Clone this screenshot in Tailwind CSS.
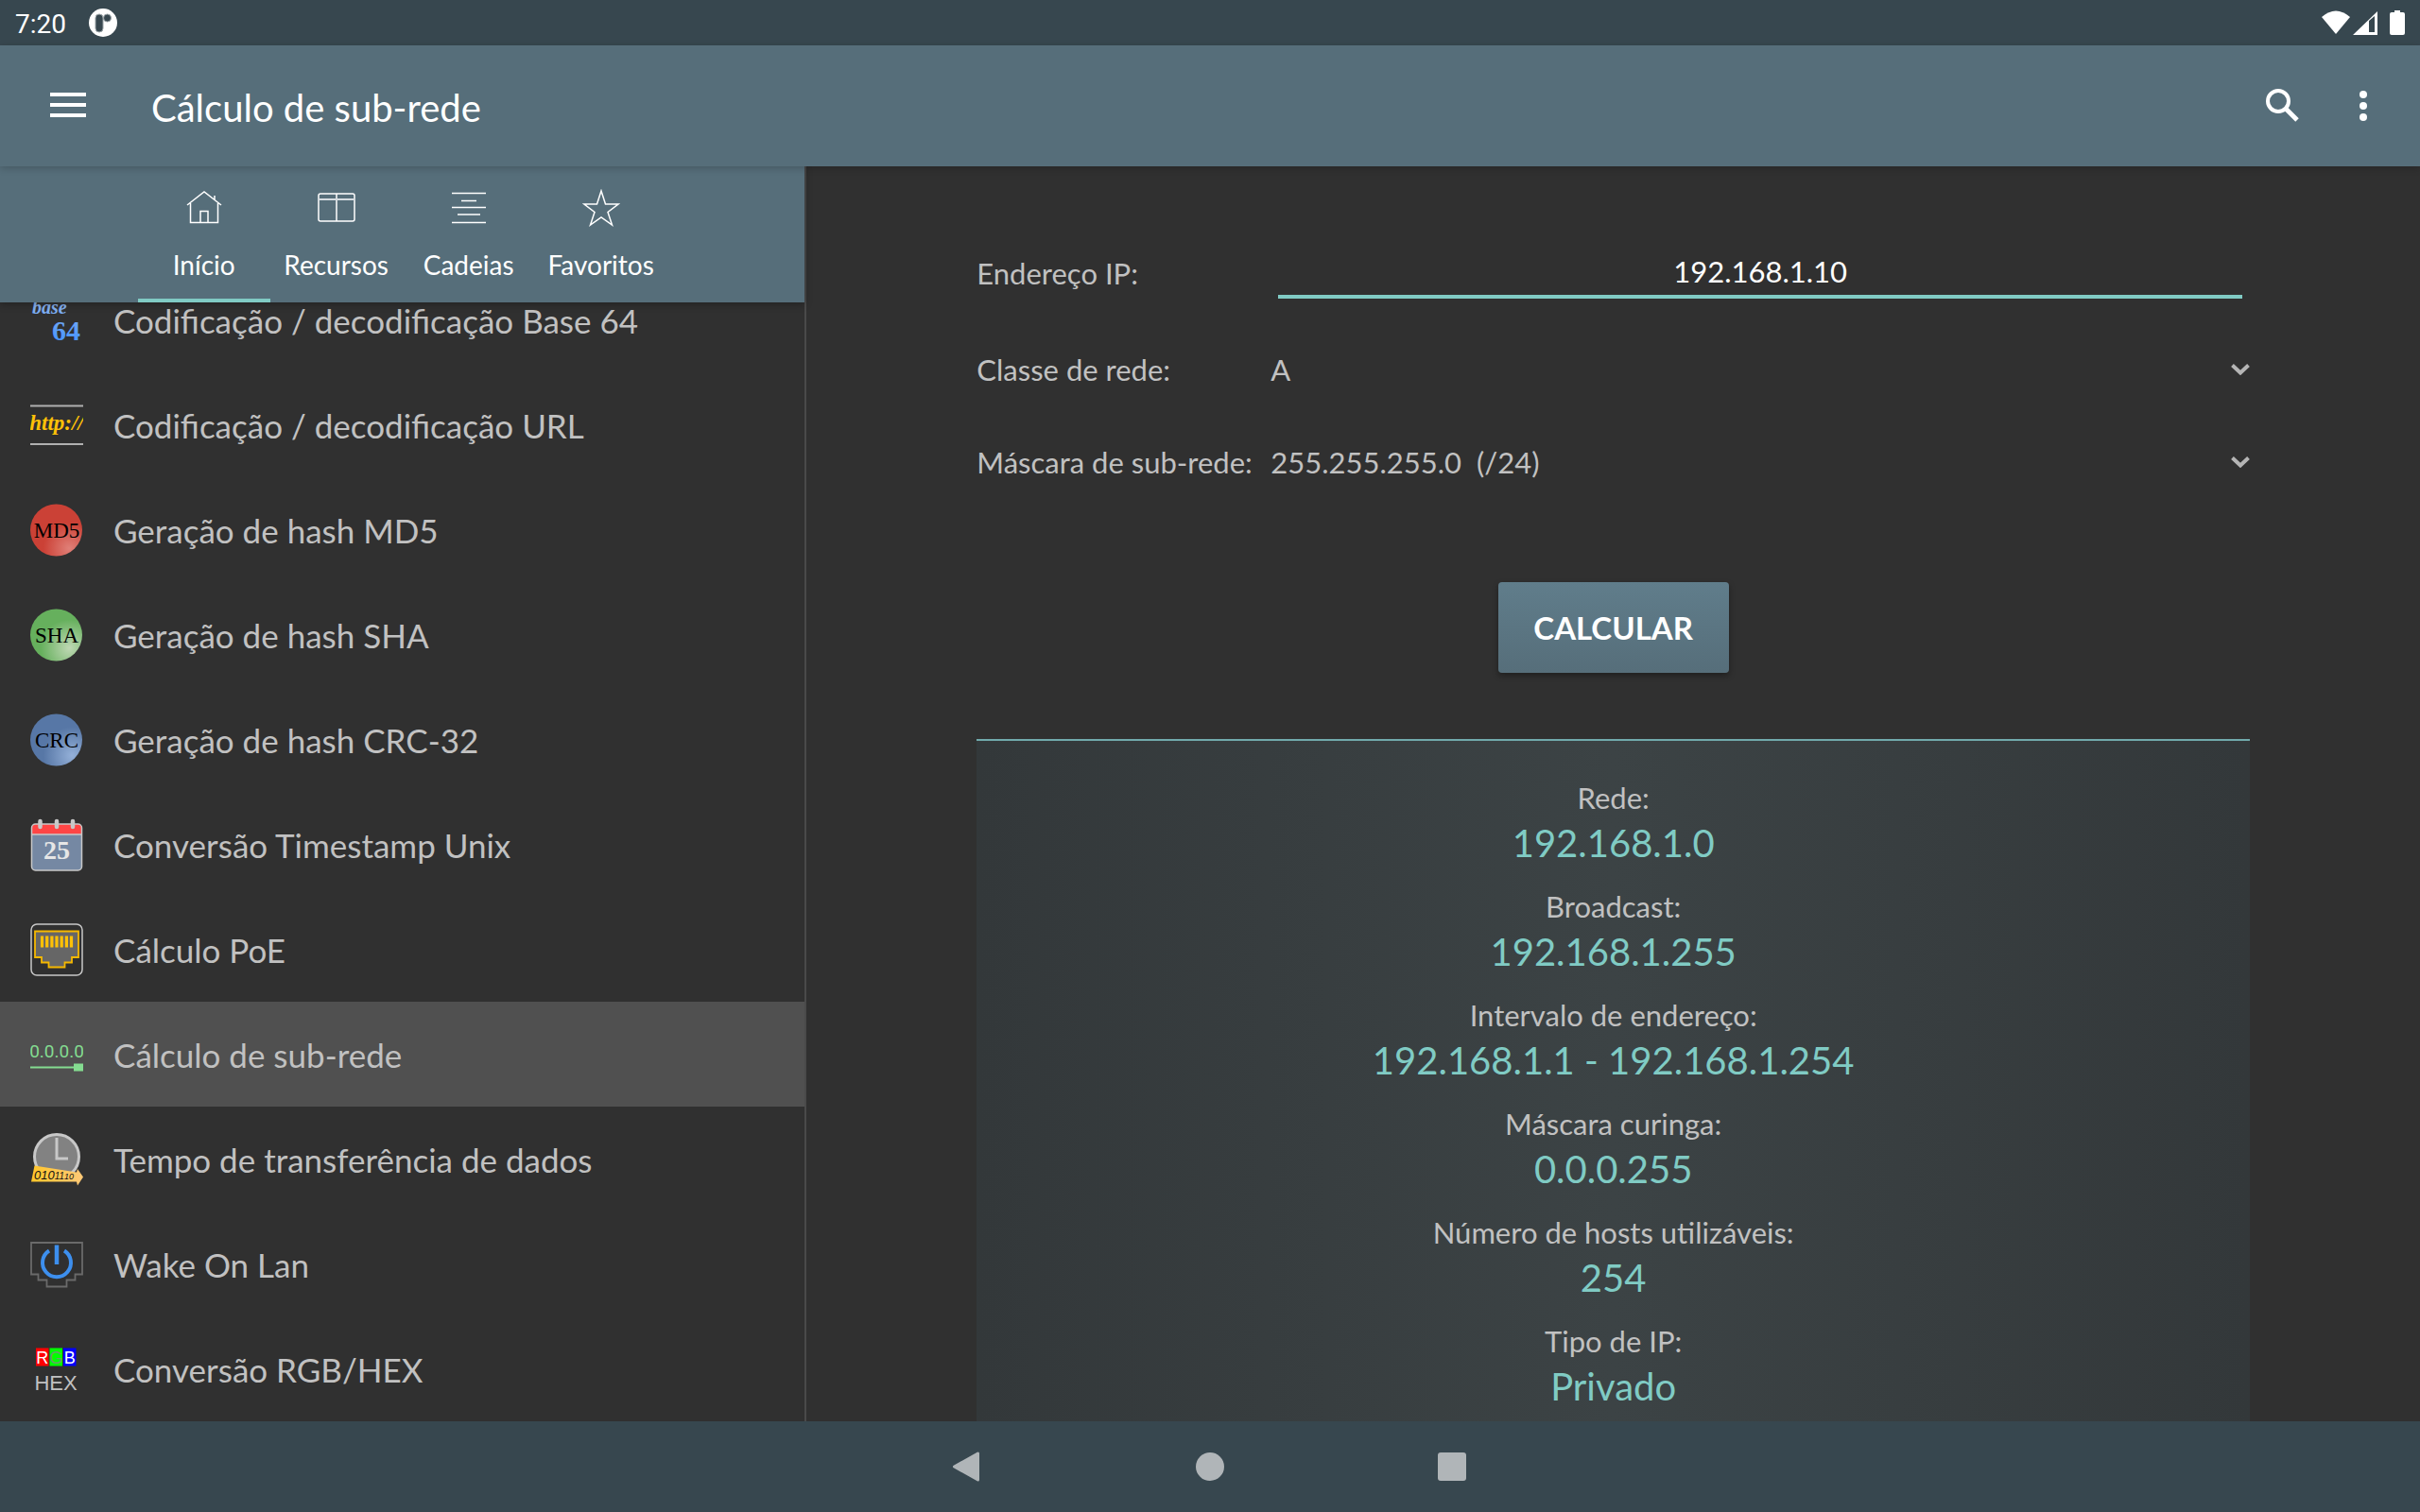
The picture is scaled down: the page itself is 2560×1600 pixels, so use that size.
<!DOCTYPE html>
<html lang="pt-BR">
<head>
  <meta charset="UTF-8">
  <meta name="viewport" content="width=device-width, initial-scale=1.0">
  <title>Cálculo de sub-rede</title>
  <script src="https://cdn.jsdelivr.net/npm/@tailwindcss/browser@4"></script>
</head>
<body class="bg-[#303030] h-screen flex flex-col overflow-hidden font-['Lato',sans-serif] text-[#c1c1c1]">

  <!-- Status bar -->
  <div class="h-12 shrink-0 bg-[#37474f] text-white flex items-center justify-between px-4">
    <div class="flex items-center gap-6">
      <span class="font-['Roboto',sans-serif] text-[28px] leading-12 pt-1">7:20</span>
      <svg class="size-[30px]" viewBox="0 0 30 30">
        <circle cx="15" cy="15" r="15" fill="#fff"/>
        <rect x="7" y="6" width="8" height="19" rx="4" fill="#37474f" stroke="#9aa3a7"/>
        <circle cx="19.500" cy="10" r="4" fill="#37474f" stroke="#9aa3a7"/>
      </svg>
    </div>
    <div class="flex items-center">
      <svg class="w-[30px] h-[26px]" viewBox="0 0 30 26"><path d="M15 25 0 7Q15-6 30 7z" fill="#fff"/></svg>
      <svg class="w-[26px] h-[26px] ml-[3px]" viewBox="0 0 26 26"><path d="M0 26 26 1v25zM17 11v12h6V6z" fill="#fff" fill-rule="evenodd"/></svg>
      <svg class="w-4 h-[26px] ml-[13px]" viewBox="0 0 16 26"><path d="M5 0h6v2h3q2 0 2 2v20q0 2-2 2H2q-2 0-2-2V4q0-2 2-2h3z" fill="#fff"/></svg>
    </div>
  </div>

  <!-- App bar -->
  <header class="h-32 shrink-0 relative z-10 bg-[#566e7a] text-white flex items-center shadow-[0_2px_8px_rgba(0,0,0,0.2)]">
    <button class="p-4 ml-9 -mt-0.5" aria-label="Menu">
      <svg class="w-10 h-[26px]" viewBox="0 0 40 26" fill="#fff"><path d="M1 0h38v4H1zM1 11h38v4H1zM1 22h38v4H1z"/></svg>
    </button>
    <h1 class="text-[40px] leading-12 ml-[52px] pt-1 grow">Cálculo de sub-rede</h1>
    <button class="p-4 mr-8" aria-label="Pesquisar">
      <svg class="size-9" viewBox="0 0 36 36" fill="none" stroke="#fff" stroke-width="4"><circle cx="14" cy="13" r="11"/><path d="m22 21 12 12" stroke-width="5"/></svg>
    </button>
    <button class="p-4 mr-10" aria-label="Mais opções">
      <svg class="w-2 h-8" viewBox="0 0 8 32" fill="#fff"><circle cx="4" cy="4" r="4"/><circle cx="4" cy="16" r="4"/><circle cx="4" cy="28" r="4"/></svg>
    </button>
  </header>

  <div class="grow min-h-0 flex">

    <!-- Tool list -->
    <aside class="w-1/3 shrink-0 flex flex-col border-r-2 border-[#4a4a4a]">
      <nav class="h-36 shrink-0 relative z-[5] bg-[#566e7a] text-white flex justify-center shadow-[0_2px_8px_rgba(0,0,0,0.3)] text-[28px] leading-10">
        <a href="#" class="w-[140px] pt-6 flex flex-col items-center gap-5 border-b-4 border-[#80cbc4]">
          <svg class="size-10 shrink-0" viewBox="0 0 40 40" fill="none" stroke="#fff" stroke-width="1.500"><path d="M2 17 20 3l18 14M5.500 15v20.500h29V15M31 11V7M16 35V23.500h8V35"/></svg>
          Início
        </a>
        <a href="#" class="w-[140px] pt-6 flex flex-col items-center gap-5">
          <svg class="size-10 shrink-0" viewBox="0 0 40 40" fill="none" stroke="#fff" stroke-width="1.500"><rect x="1" y="5" width="38" height="29" rx="2"/><path d="M20 5v29"/><path d="M1 11h38" stroke-width="2" stroke="#d5dbe0"/></svg>
          Recursos
        </a>
        <a href="#" class="w-[140px] pt-6 flex flex-col items-center gap-5">
          <svg class="size-10 shrink-0" viewBox="0 0 40 40" fill="none" stroke="#fff" stroke-width="1.500"><path d="M2 4.500h36M12 12.500h16M2 19.500h36M8 27h24M2 35.500h36"/></svg>
          Cadeias
        </a>
        <a href="#" class="w-[140px] pt-6 flex flex-col items-center gap-5">
          <svg class="size-10 shrink-0" viewBox="0 0 40 40" fill="none" stroke="#fff" stroke-width="1.500"><path d="m20 2 4.500 14H38L27 24.500 31.500 38 20 30 8.500 38 13 24.500 2 16h13.500z"/></svg>
          Favoritos
        </a>
      </nav>

      <!-- The list is scrolled to its end -->
      <ul class="grow min-h-0 flex flex-col justify-end overflow-hidden text-[35px] leading-10">
        <li class="shrink-0">
          <a href="#" class="h-[111px] px-8 flex items-center gap-8">
            <svg class="size-14 shrink-0" viewBox="0 0 56 56" font-family="Liberation Serif" font-weight="bold">
              <defs><linearGradient id="blue" x1="0" y1="0" x2="0" y2="56" gradientUnits="userSpaceOnUse"><stop offset=".2" stop-color="#8ab4f0"/><stop offset="1" stop-color="#3d8fff"/></linearGradient></defs>
              <text x="2" y="21" font-size="20" font-style="italic" fill="url(#blue)">base</text>
              <text x="23" y="49" font-size="30" fill="url(#blue)">64</text>
            </svg>
            Codificação / decodificação Base 64
          </a>
        </li>
        <li class="shrink-0">
          <a href="#" class="h-[111px] px-8 flex items-center gap-8">
            <svg class="size-14 shrink-0" viewBox="0 0 56 56">
              <path d="M0 7.500h56M0 48h56" stroke="#b0b0b0" stroke-width="2"/>
              <text x="28" y="33" text-anchor="middle" font-size="23" font-family="Liberation Serif" font-weight="bold" font-style="italic" fill="#ffc107">http://</text>
            </svg>
            Codificação / decodificação URL
          </a>
        </li>
        <li class="shrink-0">
          <a href="#" class="h-[111px] px-8 flex items-center gap-8">
            <svg class="size-14 shrink-0" viewBox="0 0 56 56">
              <defs><radialGradient id="red" cx=".75" cy=".85" r=".5"><stop offset="0" stop-color="#e08078"/><stop offset="1" stop-color="#cb4136"/></radialGradient></defs>
              <circle cx="27.500" cy="28" r="27.500" fill="url(#red)"/>
              <text x="28" y="36" text-anchor="middle" font-size="23" font-family="Liberation Serif" fill="#000">MD5</text>
            </svg>
            Geração de hash MD5
          </a>
        </li>
        <li class="shrink-0">
          <a href="#" class="h-[111px] px-8 flex items-center gap-8">
            <svg class="size-14 shrink-0" viewBox="0 0 56 56">
              <defs><radialGradient id="green" cx=".75" cy=".75" r=".55"><stop offset="0" stop-color="#bfd8b4"/><stop offset="1" stop-color="#66b05d"/></radialGradient></defs>
              <circle cx="27.500" cy="28" r="27.500" fill="url(#green)"/>
              <text x="28" y="36" text-anchor="middle" font-size="23" font-family="Liberation Serif" fill="#000">SHA</text>
            </svg>
            Geração de hash SHA
          </a>
        </li>
        <li class="shrink-0">
          <a href="#" class="h-[111px] px-8 flex items-center gap-8">
            <svg class="size-14 shrink-0" viewBox="0 0 56 56">
              <defs><radialGradient id="navy" cx=".8" cy=".8" r=".55"><stop offset="0" stop-color="#94b0d8"/><stop offset="1" stop-color="#5777a6"/></radialGradient></defs>
              <circle cx="27.500" cy="28" r="27.500" fill="url(#navy)"/>
              <text x="28" y="36" text-anchor="middle" font-size="23" font-family="Liberation Serif" fill="#000">CRC</text>
            </svg>
            Geração de hash CRC-32
          </a>
        </li>
        <li class="shrink-0">
          <a href="#" class="h-[111px] px-8 flex items-center gap-8">
            <svg class="size-14 shrink-0" viewBox="0 0 56 56">
              <rect x="1.500" y="6" width="53" height="49" rx="4" fill="#7588a3"/>
              <path d="M1.500 17v-7q0-4 4-4h45q4 0 4 4v7z" fill="#ff4545"/>
              <path d="M1.500 17h53" stroke="#c8c8c8" stroke-width="1.500"/>
              <rect x="1.500" y="6" width="53" height="49" rx="4" fill="none" stroke="#c8c8c8" stroke-width="1.500"/>
              <path d="M10.500 3v6M28 3v6M45 3v6" stroke="#c8c8c8" stroke-width="4.500" stroke-linecap="round"/>
              <text x="28" y="43" text-anchor="middle" font-size="28" font-family="Liberation Serif" font-weight="bold" fill="#e6e6e6">25</text>
            </svg>
            Conversão Timestamp Unix
          </a>
        </li>
        <li class="shrink-0">
          <a href="#" class="h-[111px] px-8 flex items-center gap-8">
            <svg class="size-14 shrink-0" viewBox="0 0 56 56">
              <rect x="1" y="1" width="54" height="54" rx="6" fill="none" stroke="#c8c8c8" stroke-width="1.500"/>
              <path d="M5 8.500h46V36h-7v5.500h-7.500v5h-17v-5H12V36H5z" fill="#666" stroke="#f5b800" stroke-width="1.800"/>
              <path d="M12.500 13.500v12M17.700 13.500v12M22.900 13.500v12M28 13.500v12M33.200 13.500v12M38.400 13.500v12M43.500 13.500v12" stroke="#ffc107" stroke-width="3.200"/>
            </svg>
            Cálculo PoE
          </a>
        </li>
        <li class="shrink-0 bg-[#505050]">
          <a href="#" class="h-[111px] px-8 flex items-center gap-8" aria-current="page">
            <svg class="size-14 shrink-0" viewBox="0 0 56 56" fill="#84dc90">
              <text x="28" y="31" text-anchor="middle" font-size="19" font-family="Roboto">0.0.0.0</text>
              <path d="M0 40.500h46v-3h10v8H46v-3H0z"/>
            </svg>
            Cálculo de sub-rede
          </a>
        </li>
        <li class="shrink-0">
          <a href="#" class="h-[111px] px-8 flex items-center gap-8">
            <svg class="size-14 shrink-0" viewBox="0 0 56 56">
              <defs><linearGradient id="amber"><stop offset="0" stop-color="#ffc62a"/><stop offset="1" stop-color="#ffc978"/></linearGradient></defs>
              <circle cx="28" cy="25" r="23.500" fill="#828282" stroke="#c8c8c8" stroke-width="3"/>
              <path d="M28 5v22h12" fill="none" stroke="#c8c8c8" stroke-width="3"/>
              <path d="m1 51.500 3.500-17L49 41.500l1-3.500 6 8.500-6 9-1-4z" fill="url(#amber)"/>
              <text x="4" y="49" font-family="Liberation Sans" font-style="italic" font-size="13" fill="#111"><tspan>010</tspan><tspan font-size="10">11</tspan><tspan font-size="9">10</tspan></text>
            </svg>
            Tempo de transferência de dados
          </a>
        </li>
        <li class="shrink-0">
          <a href="#" class="h-[111px] px-8 flex items-center gap-8">
            <svg class="size-14 shrink-0" viewBox="0 0 56 56" fill="none">
              <path d="M1 5h54v33.500h-7.500v6h-9v7h-21v-7h-9v-6H1z" stroke="#6a6a6a" stroke-width="1.800"/>
              <path d="M20 13.500a15 15 0 1 0 16 0" stroke="#3d8fee" stroke-width="4"/>
              <path d="M28 7.500V28" stroke="#3d8fee" stroke-width="4.500"/>
            </svg>
            Wake On Lan
          </a>
        </li>
        <li class="shrink-0">
          <a href="#" class="h-[111px] px-8 flex items-center gap-8">
            <svg class="size-14 shrink-0" viewBox="0 0 56 56" font-family="Liberation Sans" text-anchor="middle">
              <path d="M6 5.500h13.500v19H6z" fill="#f00"/>
              <path d="M20.500 5.500h13.500v19H20.500z" fill="#0f0"/>
              <path d="M35 5.500h13.500v19H35z" fill="#00f"/>
              <g font-size="18"><text x="12.700" y="22" fill="#fff">R</text><text x="27.200" y="22" fill="#6b9c6b">G</text><text x="41.700" y="22" fill="#fff">B</text></g>
              <text x="27" y="50" font-size="22" fill="#c1c1c1">HEX</text>
            </svg>
            Conversão RGB/HEX
          </a>
        </li>
      </ul>
    </aside>

    <!-- Subnet calculator -->
    <main class="grow min-w-0 px-[180px] pt-16 overflow-hidden flex flex-col text-[31px] leading-12">
      <form id="subnet-form" class="flex flex-col">
        <div class="h-[98px] mb-1 flex items-center">
          <label for="ip" class="w-[311px]">Endereço IP:</label>
          <input id="ip" type="text" value="192.168.1.10" class="grow mx-2 h-[54px] border-b-4 border-[#80cbc4] text-center text-white outline-none">
        </div>
        <div class="h-[98px] flex items-center relative">
          <label for="net-class" class="w-[311px]">Classe de rede:</label>
          <select id="net-class" class="grow appearance-none bg-[#303030] outline-none">
            <option>A</option>
            <option>B</option>
            <option>C</option>
          </select>
          <svg class="w-5 h-3 absolute right-0 pointer-events-none" viewBox="0 0 20 12" fill="none" stroke="#b5b5b5" stroke-width="4"><path d="m1.500 1.500 8.500 8 8.500-8"/></svg>
        </div>
        <div class="h-[98px] flex items-center relative">
          <label for="mask" class="w-[311px]">Máscara de sub-rede:</label>
          <select id="mask" class="grow appearance-none bg-[#303030] outline-none">
            <option>255.255.255.0&nbsp; (/24)</option>
          </select>
          <svg class="w-5 h-3 absolute right-0 pointer-events-none" viewBox="0 0 20 12" fill="none" stroke="#b5b5b5" stroke-width="4"><path d="m1.500 1.500 8.500 8 8.500-8"/></svg>
        </div>
        <button type="submit" class="self-center mt-[78px] w-[244px] h-24 rounded-sm bg-linear-to-b from-[#607d8b] to-[#566e7a] text-white font-bold text-[33px] shadow-[0_3px_6px_rgba(0,0,0,0.35)]">CALCULAR</button>
      </form>

      <dl class="grow shrink-0 mt-[70px] pt-9 border-t-2 border-[#71aaac] bg-linear-to-r from-[#33383a] via-[#3c4345] to-[#33383a] flex flex-col gap-[19px] text-center">
        <div><dt>Rede:</dt><dd class="text-[40px] leading-12 text-[#80cbc4]">192.168.1.0</dd></div>
        <div><dt>Broadcast:</dt><dd class="text-[40px] leading-12 text-[#80cbc4]">192.168.1.255</dd></div>
        <div><dt>Intervalo de endereço:</dt><dd class="text-[40px] leading-12 text-[#80cbc4]">192.168.1.1 - 192.168.1.254</dd></div>
        <div><dt>Máscara curinga:</dt><dd class="text-[40px] leading-12 text-[#80cbc4]">0.0.0.255</dd></div>
        <div><dt>Número de hosts utilizáveis:</dt><dd class="text-[40px] leading-12 text-[#80cbc4]">254</dd></div>
        <div><dt>Tipo de IP:</dt><dd class="text-[40px] leading-12 text-[#80cbc4]">Privado</dd></div>
      </dl>
    </main>
  </div>

  <!-- System navigation -->
  <div class="h-24 shrink-0 relative z-10 bg-[#37474f] flex justify-center items-center">
    <button class="w-64 flex justify-center" aria-label="Voltar">
      <svg class="size-8" viewBox="0 0 32 32"><path d="M26.500 2v28l-25-14z" fill="#b0b5b8" stroke="#b0b5b8" stroke-width="3" stroke-linejoin="round"/></svg>
    </button>
    <button class="w-64 flex justify-center" aria-label="Início">
      <svg class="size-8" viewBox="0 0 32 32"><circle cx="16" cy="16" r="15" fill="#b0b5b8"/></svg>
    </button>
    <button class="w-64 flex justify-center" aria-label="Recentes">
      <svg class="size-8" viewBox="0 0 32 32"><rect x="1" y="1" width="30" height="30" rx="3" fill="#b0b5b8"/></svg>
    </button>
  </div>

  <script>
    document.getElementById("subnet-form").addEventListener("submit", function(e) {
      e.preventDefault();
    });
  </script>
</body>
</html>
